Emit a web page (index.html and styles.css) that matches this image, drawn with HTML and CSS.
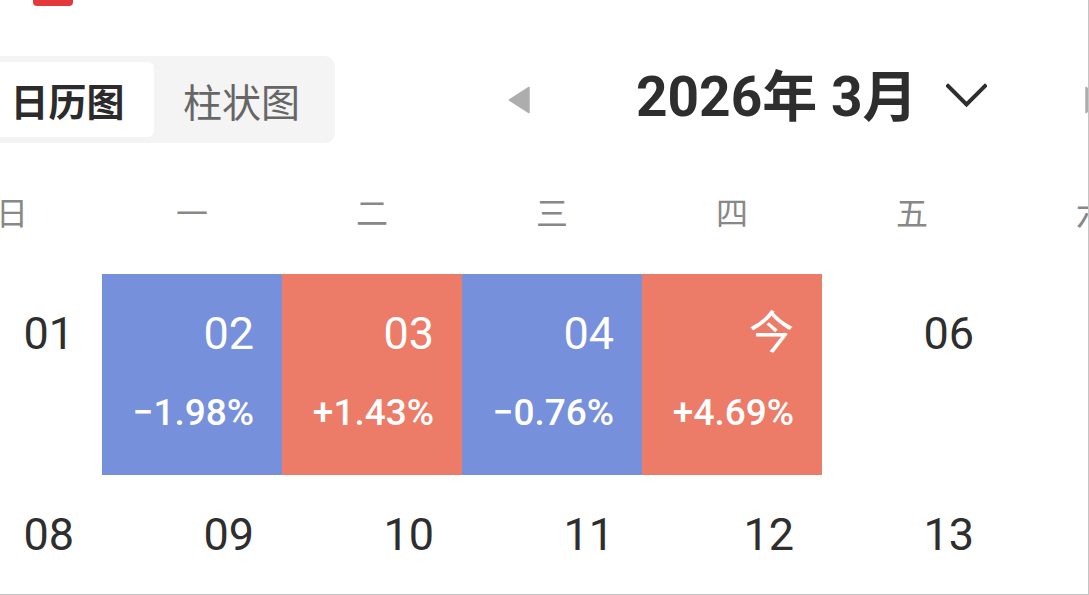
FILE: index.html
```html
<!DOCTYPE html>
<html lang="zh-CN">
<head>
<meta charset="utf-8">
<title>日历图</title>
<link rel="stylesheet" href="styles.css">
</head>
<body>
<div class="frame">
  <div class="topbar"><span class="red-tab"></span></div>
  <div class="calendar">
    <div class="toolbar">
      <div class="segmented">
        <div class="seg-tab active">日历图</div>
        <div class="seg-tab">柱状图</div>
      </div>
      <div class="nav">
        <svg class="tri" width="22" height="28" viewBox="0 0 22 28"><path d="M21 1.5 L21 26.5 L1.5 14 Z" fill="#adadad" stroke="#adadad" stroke-width="1.5" stroke-linejoin="round"/></svg>
        <div class="title">2026年 3月</div>
        <svg class="chev" width="41" height="25" viewBox="0 0 41 25"><path d="M2 3 L20.5 21.5 L39 3" fill="none" stroke="#2e2e2e" stroke-width="4" stroke-linecap="square"/></svg>
        <svg class="tri tri-right" width="22" height="28" viewBox="0 0 22 28"><path d="M1 1.5 L1 26.5 L20.5 14 Z" fill="#adadad" stroke="#adadad" stroke-width="1.5" stroke-linejoin="round"/></svg>
      </div>
    </div>
    <div class="weekdays">
      <div>日</div><div>一</div><div>二</div><div>三</div><div>四</div><div>五</div><div>六</div>
    </div>
    <div class="days">
      <div class="day"><span class="num">01</span></div>
      <div class="day down"><span class="num">02</span><span class="pct">−1.98%</span></div>
      <div class="day up"><span class="num">03</span><span class="pct">+1.43%</span></div>
      <div class="day down"><span class="num">04</span><span class="pct">−0.76%</span></div>
      <div class="day up"><span class="num">今</span><span class="pct">+4.69%</span></div>
      <div class="day"><span class="num">06</span></div>
      <div class="day"><span class="num">07</span></div>
      <div class="day"><span class="num">08</span></div>
      <div class="day"><span class="num">09</span></div>
      <div class="day"><span class="num">10</span></div>
      <div class="day"><span class="num">11</span></div>
      <div class="day"><span class="num">12</span></div>
      <div class="day"><span class="num">13</span></div>
      <div class="day"><span class="num">14</span></div>
    </div>
  </div>
</div>
</body>
</html>
```

FILE: styles.css
```css
* { box-sizing: border-box; }
html, body { margin: 0; padding: 0; background: #fff; }
body {
  font-family: Roboto, "Noto Sans CJK SC", sans-serif;
  color: #2e2e2e;
}
.frame {
  width: 1089px;
  height: 595px;
  overflow: hidden;
  border-right: 1px solid #c4c4c4;
  border-bottom: 1px solid #c4c4c4;
  position: relative;
}
.topbar {
  height: 6px;
  padding-left: 33px;
  display: flex;
}
.red-tab {
  display: block;
  width: 40px;
  height: 6px;
  background: #e5383b;
  border-radius: 0 0 4px 4px;
}
.calendar {
  margin-left: -78px;
  width: 1260px;
}
.toolbar {
  margin-top: 50px;
  display: flex;
  align-items: center;
  height: 87px;
}
.segmented {
  margin-left: 51px;
  display: flex;
  padding: 6px;
  background: #f4f4f4;
  border-radius: 10px;
  height: 87px;
}
.seg-tab {
  width: 175px;
  height: 75px;
  display: flex;
  align-items: center;
  justify-content: center;
  font-family: "Noto Sans CJK SC", sans-serif;
  font-size: 39px;
  color: #666;
  border-radius: 6px;
  padding-left: 0;
}
.seg-tab.active {
  background: #fff;
  color: #2b2b2b;
  font-weight: 700;
  font-size: 38px;
  padding-left: 2px;
}
.nav {
  display: flex;
  align-items: center;
  margin-left: 173px;
}
.tri { display: block; }
.title {
  margin-left: 106px;
  font-size: 55px;
  font-weight: 700;
  line-height: 1;
  color: #2e2e2e;
  white-space: nowrap;
  margin-top: -4px;
}
.chev { display: block; margin-left: 29px; margin-top: -8px; }
.tri-right { margin-left: 98px; }
.weekdays {
  margin-top: 48px;
  display: grid;
  grid-template-columns: repeat(7, 180px);
  font-family: "Noto Sans CJK SC", sans-serif;
  font-size: 32px;
  line-height: 40px;
  color: #888;
  text-align: center;
}
.days {
  margin-top: 43px;
  display: grid;
  grid-template-columns: repeat(7, 180px);
  grid-auto-rows: 201px;
}
.day {
  display: flex;
  flex-direction: column;
  align-items: flex-end;
  padding: 37px 28px 0 0;
  color: #2e2e2e;
}
.num {
  font-size: 45px;
  line-height: 1;
}
.pct {
  margin-top: 38px;
  font-size: 37px;
  font-weight: 500;
  line-height: 1;
}
.day.down { background: #7690dc; color: #fff; }
.day.up { background: #ec7b67; color: #fff; }
```
